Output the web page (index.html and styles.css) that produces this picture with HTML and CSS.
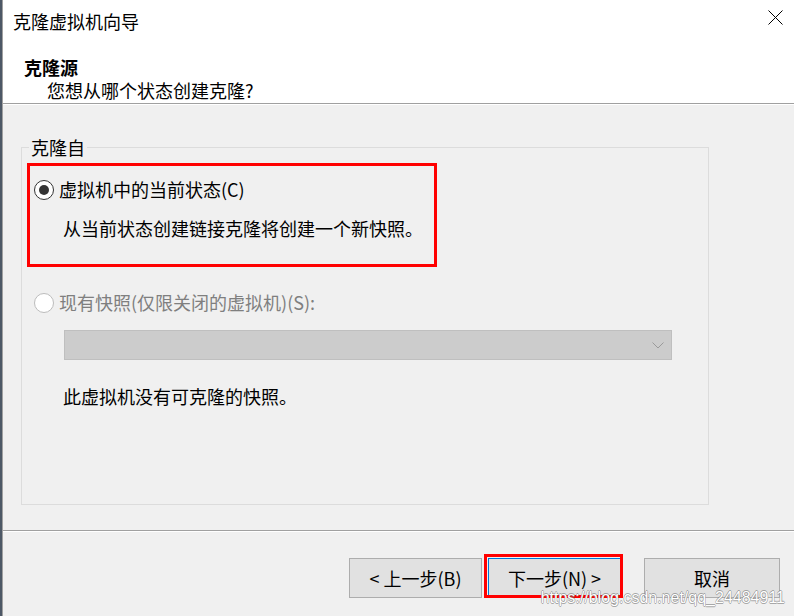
FILE: index.html
```html
<!DOCTYPE html>
<html lang="zh-CN">
<head>
<meta charset="utf-8">
<title>克隆虚拟机向导</title>
<link rel="stylesheet" href="styles.css">
</head>
<body>
<div class="edge"></div>
<div class="window">
  <header class="header">
    <div class="titlebar">
      <span class="title">克隆虚拟机向导</span>
      <svg class="close" width="15" height="15" viewBox="0 0 15 15"><path d="M0.5 0.5 L14.5 14.5 M14.5 0.5 L0.5 14.5" stroke="#000" stroke-width="1" fill="none"/></svg>
    </div>
    <div class="head-title">克隆源</div>
    <div class="head-sub">您想从哪个状态创建克隆?</div>
  </header>
  <main class="main">
    <fieldset class="group">
      <legend class="group-label">克隆自</legend>
      <div class="highlight">
        <div class="opt-row">
          <span class="radio checked"></span>
          <span class="opt-text">虚拟机中的当前状态(C)</span>
        </div>
        <div class="desc">从当前状态创建链接克隆将创建一个新快照。</div>
      </div>
      <div class="opt-row opt-row-2">
        <span class="radio disabled"></span>
        <span class="opt-text muted">现有快照(仅限关闭的虚拟机)(S):</span>
      </div>
      <div class="select">
        <svg width="12" height="7" viewBox="0 0 12 7"><polyline points="0.5,0.5 6,6 11.5,0.5" fill="none" stroke="#9a9a9a" stroke-width="1"/></svg>
      </div>
      <div class="note">此虚拟机没有可克隆的快照。</div>
    </fieldset>
  </main>
  <footer class="footer">
    <div class="buttons">
      <button class="btn btn-back">&lt; 上一步(B)</button>
      <button class="btn btn-next">下一步(N) &gt;<span class="mark"></span></button>
      <button class="btn btn-cancel">取消</button>
    </div>
  </footer>
</div>
<div class="watermark">https://blog.csdn.net/qq_24484911</div>
</body>
</html>
```

FILE: styles.css
```css
* { box-sizing: border-box; }
html, body { margin: 0; padding: 0; }
body {
  width: 794px;
  height: 616px;
  overflow: hidden;
  display: flex;
  background: #f0f0f0;
  font-family: "Noto Sans CJK SC", "Noto Sans", sans-serif;
  font-size: 18px;
  color: #000;
  position: relative;
}
.edge {
  width: 2px;
  flex: none;
  background: #4d5866;
}
.window {
  flex: 1;
  display: flex;
  flex-direction: column;
  border-left: 1px solid #a0a0a0;
}
.header {
  background: #fff;
  height: 104px;
  border-bottom: 1px solid #a0a0a0;
  flex: none;
}
.titlebar {
  height: 42px;
  margin-bottom: 14px;
  padding-left: 10px;
  padding-right: 11px;
  display: flex;
  align-items: center;
  justify-content: space-between;
}
.title { line-height: 42px; }
.close { display: block; margin-top: -7px; }
.head-title {
  font-weight: bold;
  line-height: 23px;
  padding-left: 21px;
}
.head-sub {
  line-height: 23px;
  padding-left: 44px;
}
.main {
  flex: 1;
  border-top: 1px solid #fff;
  padding-left: 18px;
  padding-top: 30px;
}
.group {
  margin: 0;
  padding: 0;
  width: 688px;
  height: 370px;
  min-width: 0;
  border: 1px solid #dcdcdc;
}
.group-label {
  padding: 0 2px;
  margin-left: 7px;
  line-height: 24px;
}
.highlight {
  margin: 4px 0 0 5px;
  width: 410px;
  height: 104px;
  border: 3px solid #ff0000;
}
.opt-row {
  display: flex;
  align-items: center;
  height: 24px;
  margin-top: 11px;
  padding-left: 4px;
}
.opt-row-2 {
  margin-top: 23px;
  padding-left: 12px;
}
.radio {
  width: 20px;
  height: 20px;
  border-radius: 50%;
  background: #fff;
  border: 1.5px solid #333;
  margin-top: 2px;
  display: flex;
  align-items: center;
  justify-content: center;
  flex: none;
}
.radio.checked::after {
  content: "";
  width: 10px;
  height: 10px;
  border-radius: 50%;
  background: #333;
}
.radio.disabled { border-color: #bcbcbc; }
.opt-text {
  margin-left: 5px;
  line-height: 24px;
}
.muted { color: #7f7f7f; }
.desc {
  margin-top: 15px;
  padding-left: 33px;
  line-height: 24px;
}
.select {
  margin: 16px 0 0 42px;
  width: 608px;
  height: 30px;
  background: #cccccc;
  border: 1px solid #bfbfbf;
  display: flex;
  align-items: center;
  justify-content: flex-end;
  padding-right: 7px;
}
.select svg { display: block; }
.note {
  margin-top: 24px;
  padding-left: 41px;
  line-height: 24px;
}
.footer {
  flex: none;
  height: 86px;
  border-top: 1px solid #a0a0a0;
  box-shadow: inset 0 1px 0 #fff;
  padding-top: 27px;
}
.buttons {
  display: flex;
  justify-content: flex-end;
  padding-right: 14px;
}
.btn {
  height: 40px;
  width: 133px;
  background: #e1e1e1;
  border: 1px solid #adadad;
  font-family: inherit;
  font-size: 18px;
  color: #000;
  padding: 0;
  line-height: 36px;
  position: relative;
}
.btn-next {
  margin-left: 6px;
  border-color: #0078d7;
}
.btn-cancel {
  margin-left: 23px;
  width: 136px;
}
.mark {
  position: absolute;
  left: -5px;
  top: -5px;
  width: 139px;
  height: 44px;
  border: 3px solid #ff0000;
}
.watermark {
  position: absolute;
  right: 9px;
  bottom: 9px;
  font-family: "Liberation Sans", Arial, sans-serif;
  font-size: 16px;
  line-height: 18px;
  color: #ffffff;
  text-shadow: 0.6px 0 0 rgba(120, 120, 120, 0.6), -0.6px 0 0 rgba(120, 120, 120, 0.6), 0 0.6px 0 rgba(120, 120, 120, 0.6), 0 -0.6px 0 rgba(120, 120, 120, 0.6);
}
```
